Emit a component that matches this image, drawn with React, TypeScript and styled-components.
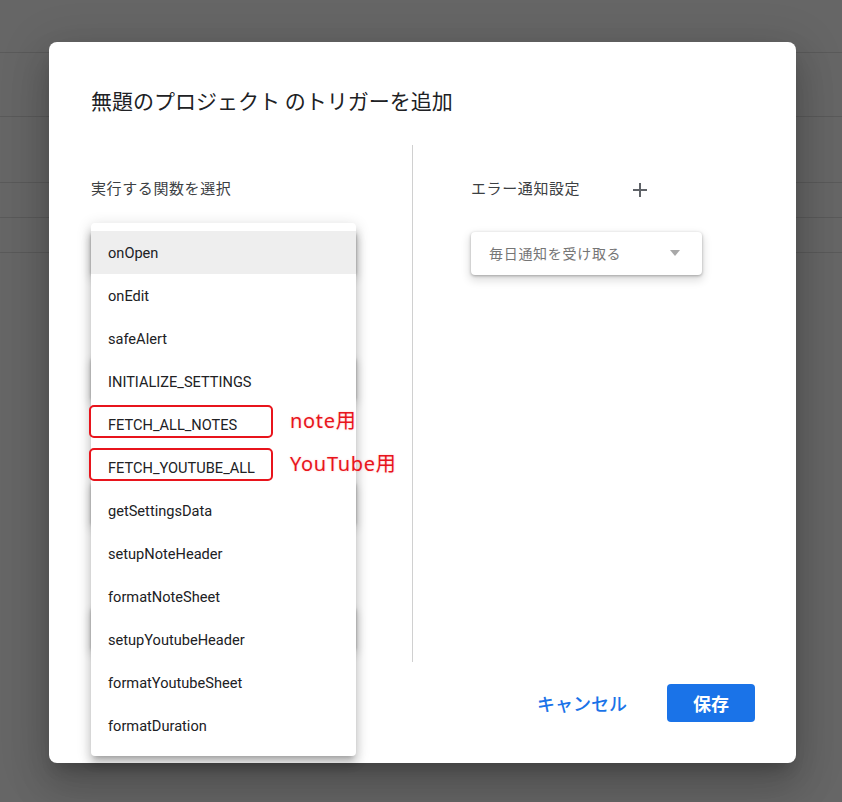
import React from "react";
import styled, { createGlobalStyle } from "styled-components";

const GlobalStyle = createGlobalStyle`
  html, body {
    margin: 0;
    padding: 0;
  }
  body {
    background: #666666;
    font-family: Roboto, "Noto Sans CJK JP", sans-serif;
    -webkit-font-smoothing: antialiased;
  }
`;

const JP = `"Noto Sans CJK JP", Roboto, sans-serif`;

const functions = [
  "onOpen",
  "onEdit",
  "safeAlert",
  "INITIALIZE_SETTINGS",
  "FETCH_ALL_NOTES",
  "FETCH_YOUTUBE_ALL",
  "getSettingsData",
  "setupNoteHeader",
  "formatNoteSheet",
  "setupYoutubeHeader",
  "formatYoutubeSheet",
  "formatDuration",
];

// 赤枠のメモ
const notes: Record<string, string> = {
  FETCH_ALL_NOTES: "note用",
  FETCH_YOUTUBE_ALL: "YouTube用",
};

const leftGroups = [
  "実行する関数を選択",
  "実行するデプロイを選択",
  "イベントのソースを選択",
  "イベントの種類を選択",
];

const App: React.FC = () => {
  return (
    <>
      <GlobalStyle />
      <Page>
        <Backdrop>
          {[52, 63, 65, 34, 34].map((h, i) => (
            <BackdropRow key={i} style={{ height: h }} />
          ))}
        </Backdrop>

        <Dialog>
          <Title>無題のプロジェクト のトリガーを追加</Title>

          <Body>
            <LeftColumn>
              {leftGroups.map((label, i) => (
                <FieldGroup key={label}>
                  <Label $hidden={i > 0}>{label}</Label>
                  <SelectBox $width={265} />
                </FieldGroup>
              ))}

              <Menu>
                {functions.map((name, i) => (
                  <MenuItem key={name} $active={i === 0}>
                    {name}
                    {notes[name] && (
                      <>
                        <MarkBox />
                        <MarkText>{notes[name]}</MarkText>
                      </>
                    )}
                  </MenuItem>
                ))}
              </Menu>
            </LeftColumn>

            <RightColumn>
              <LabelRow>
                <Label>エラー通知設定</Label>
                <PlusButton>
                  <svg width="16" height="16" viewBox="0 0 16 16">
                    <path d="M8 1v14M1 8h14" stroke="#5f6368" strokeWidth="2" />
                  </svg>
                </PlusButton>
              </LabelRow>
              <SelectBox $width={231}>
                <SelectText>毎日通知を受け取る</SelectText>
                <Caret />
              </SelectBox>
            </RightColumn>
          </Body>

          <Footer>
            <TextButton>キャンセル</TextButton>
            <PrimaryButton>保存</PrimaryButton>
          </Footer>
        </Dialog>
      </Page>
    </>
  );
};

const Page = styled.div`
  position: relative;
  width: 842px;
  height: 802px;
  overflow: hidden;
  background: #666666;
`;

const Backdrop = styled.div`
  display: flex;
  flex-direction: column;
`;

const BackdropRow = styled.div`
  border-bottom: 1px solid #5a5a5a;
`;

const Dialog = styled.div`
  position: absolute;
  top: 42px;
  left: 49px;
  width: 747px;
  height: 721px;
  box-sizing: border-box;
  padding: 40px 41px 41px 42px;
  background: #ffffff;
  border-radius: 8px;
  box-shadow: 0 11px 15px -7px rgba(0, 0, 0, 0.2),
    0 24px 38px 3px rgba(0, 0, 0, 0.14), 0 9px 46px 8px rgba(0, 0, 0, 0.12);
  display: flex;
  flex-direction: column;
`;

const Title = styled.h1`
  margin: 0;
  font-family: ${JP};
  font-size: 21px;
  font-weight: 400;
  line-height: 36px;
  color: #202124;
`;

const Body = styled.div`
  display: flex;
  height: 517px;
  margin-top: 27px;
`;

const LeftColumn = styled.div`
  position: relative;
  width: 322px;
  box-sizing: border-box;
  padding-top: 33px;
  border-right: 1px solid #d0d0d0;
  display: flex;
  flex-direction: column;
  gap: 28px;
`;

const RightColumn = styled.div`
  flex: 1;
  padding: 33px 0 0 58px;
  display: flex;
  flex-direction: column;
  gap: 34px;
`;

const FieldGroup = styled.div`
  display: flex;
  flex-direction: column;
  gap: 34px;
`;

const LabelRow = styled.div`
  display: flex;
  align-items: center;
  gap: 48px;
  height: 20px;
`;

const Label = styled.div<{ $hidden?: boolean }>`
  font-family: ${JP};
  font-size: 15px;
  letter-spacing: 0.6px;
  line-height: 20px;
  color: #3c4043;
  visibility: ${({ $hidden }) => ($hidden ? "hidden" : "visible")};
`;

const PlusButton = styled.div`
  display: flex;
  align-items: center;
  justify-content: center;
  width: 24px;
  height: 24px;
  margin-top: 4px;
`;

const SelectBox = styled.div<{ $width: number }>`
  width: ${({ $width }) => $width}px;
  height: 43px;
  box-sizing: border-box;
  padding: 0 22px 2px 18px;
  border-radius: 4px;
  background: #ffffff;
  box-shadow: 0 1px 3px rgba(0, 0, 0, 0.3), 0 4px 8px 2px rgba(0, 0, 0, 0.12);
  display: flex;
  align-items: center;
  justify-content: space-between;
`;

const SelectText = styled.span`
  font-family: ${JP};
  font-size: 14px;
  letter-spacing: 0.7px;
  color: #757575;
`;

const Caret = styled.span`
  width: 0;
  height: 0;
  border-left: 5.5px solid transparent;
  border-right: 5.5px solid transparent;
  border-top: 6px solid #a8a8a8;
`;

const Menu = styled.div`
  position: absolute;
  top: 78px;
  left: 0;
  width: 265px;
  padding: 8px 0 9px;
  background: #ffffff;
  border-radius: 4px;
  box-shadow: 0 5px 5px -3px rgba(0, 0, 0, 0.2),
    0 8px 10px 1px rgba(0, 0, 0, 0.14), 0 3px 14px 2px rgba(0, 0, 0, 0.12);
  z-index: 2;
`;

const MenuItem = styled.div<{ $active?: boolean }>`
  position: relative;
  height: 43px;
  padding-left: 17px;
  display: flex;
  align-items: center;
  font-family: Roboto, sans-serif;
  font-size: 14.6px;
  color: #202124;
  background: ${({ $active }) => ($active ? "#eeeeee" : "transparent")};
`;

const MarkBox = styled.span`
  position: absolute;
  left: -2px;
  top: 2px;
  width: 184px;
  height: 33px;
  box-sizing: border-box;
  border: 2px solid #e8141c;
  border-radius: 5px;
`;

const MarkText = styled.span`
  position: absolute;
  left: 199px;
  top: 4px;
  font-family: "Noto Sans", "Noto Sans CJK JP", sans-serif;
  font-size: 20px;
  letter-spacing: 0.7px;
  line-height: 28px;
  color: #e8141c;
  white-space: nowrap;
  text-shadow: 0 0 2px rgba(255, 80, 80, 0.35);
`;

const Footer = styled.div`
  margin-top: 22px;
  display: flex;
  justify-content: flex-end;
  align-items: center;
  gap: 32px;
`;

const TextButton = styled.button`
  border: none;
  background: none;
  padding: 0 8px;
  height: 38px;
  font-family: ${JP};
  font-size: 18px;
  font-weight: 500;
  color: #1a73e8;
`;

const PrimaryButton = styled.button`
  width: 88px;
  height: 38px;
  border: none;
  border-radius: 4px;
  background: #1a73e8;
  font-family: ${JP};
  font-size: 18px;
  font-weight: 700;
  color: #ffffff;
`;

export default App;
